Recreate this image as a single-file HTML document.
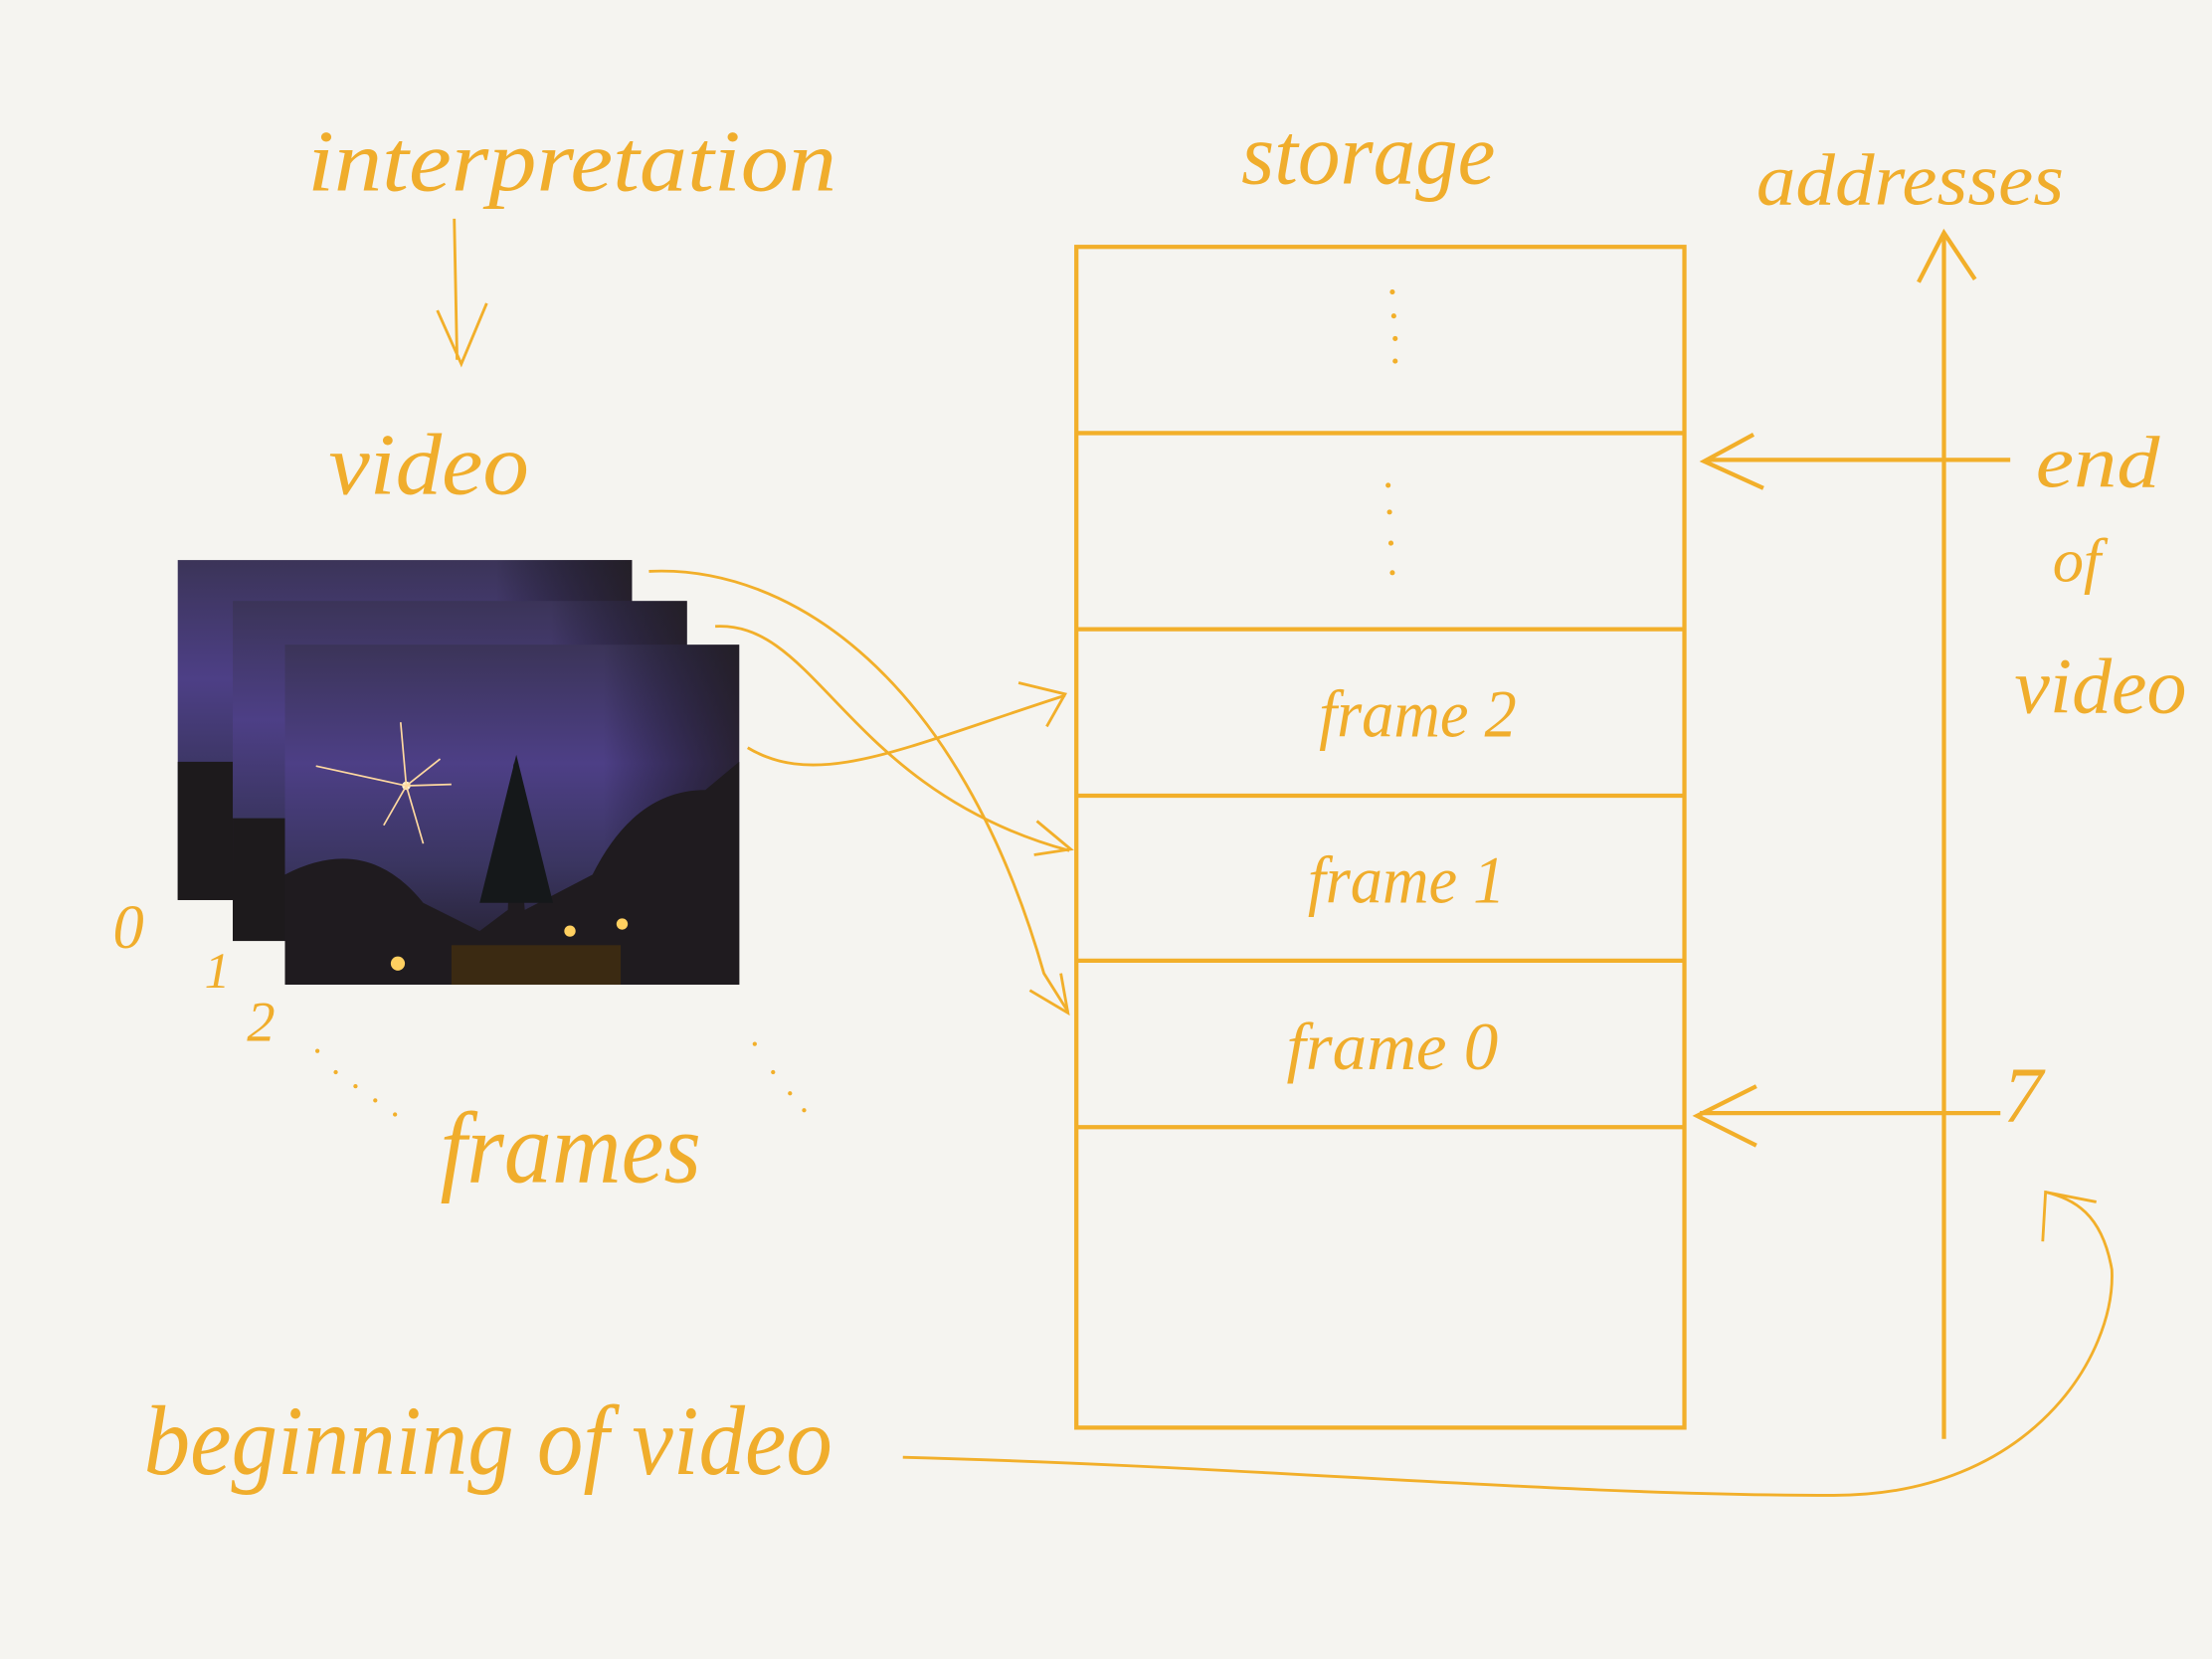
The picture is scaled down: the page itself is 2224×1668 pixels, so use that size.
<!DOCTYPE html>
<html><head><meta charset="utf-8"><style>
html,body{margin:0;padding:0;background:#f5f4f0;}
svg{display:block;}
text{font-family:"Liberation Serif",serif;font-style:italic;fill:#f0ad2c;}
</style></head><body>
<svg width="2224" height="1668" viewBox="0 0 1568 1176" xmlns="http://www.w3.org/2000/svg">
<defs>
<linearGradient id="sky" x1="0" y1="0" x2="0" y2="1">
<stop offset="0" stop-color="#3b3458"/><stop offset="0.35" stop-color="#4d3f86"/><stop offset="0.65" stop-color="#3a3560"/><stop offset="1" stop-color="#1e1a22"/>
</linearGradient>
<linearGradient id="dark" x1="0" y1="0" x2="1" y2="0">
<stop offset="0" stop-color="#000" stop-opacity="0"/><stop offset="0.7" stop-color="#000" stop-opacity="0"/><stop offset="1" stop-color="#1a1612" stop-opacity="0.7"/>
</linearGradient>
</defs>
<rect width="1568" height="1176" fill="#f5f4f0"/>
<g>
<rect x="126" y="397" width="322" height="241" fill="url(#sky)"/><rect x="126" y="397" width="322" height="241" fill="url(#dark)"/>
<rect x="126" y="540" width="40" height="98" fill="#1d1a1c"/>
<rect x="165" y="426" width="322" height="241" fill="url(#sky)"/><rect x="165" y="426" width="322" height="241" fill="url(#dark)"/>
<rect x="165" y="580" width="40" height="87" fill="#1d1a1c"/>
<rect x="202" y="457" width="322" height="241" fill="url(#sky)"/><rect x="202" y="457" width="322" height="241" fill="url(#dark)"/>
<path d="M202 620 Q260 590 300 640 L340 660 L360 645 L364 540 L372 645 L420 620 Q450 560 500 560 L524 540 L524 698 L202 698Z" fill="#1f1b1f"/>
<polygon points="366,535 340,640 392,640" fill="#15181a"/>
<circle cx="288" cy="557" r="3" fill="#fff2d0"/>
<g stroke="#ffd9a0" stroke-width="1.2"><line x1="288" y1="557" x2="284" y2="512"/><line x1="288" y1="557" x2="312" y2="538"/><line x1="288" y1="557" x2="224" y2="543"/><line x1="288" y1="557" x2="320" y2="556"/><line x1="288" y1="557" x2="272" y2="585"/><line x1="288" y1="557" x2="300" y2="598"/></g>
<rect x="320" y="670" width="120" height="28" fill="#3b2a12"/>
<circle cx="404" cy="660" r="4" fill="#ffd060"/><circle cx="441" cy="655" r="4" fill="#ffd060"/><circle cx="282" cy="683" r="5" fill="#ffd060"/>
</g>
<g fill="none" stroke="#f2af2a" stroke-width="3">
<rect x="763" y="175" width="431" height="837"/>
<line x1="763" y1="307" x2="1194" y2="307"/><line x1="763" y1="446" x2="1194" y2="446"/>
<line x1="763" y1="564" x2="1194" y2="564"/><line x1="763" y1="681" x2="1194" y2="681"/>
<line x1="763" y1="799" x2="1194" y2="799"/>
<line x1="1378" y1="165" x2="1378" y2="1020"/>
<polyline points="1360,200 1378,165 1400,198"/>
<line x1="1425" y1="326" x2="1210" y2="326"/><polyline points="1243,308 1208,327 1250,346"/>
<line x1="1418" y1="789" x2="1205" y2="789"/><polyline points="1245,770 1203,791 1245,812"/>
</g>
<g fill="none" stroke="#f2af2a" stroke-width="2">
<path d="M460 405 C560 400 680 480 740 690 L757 717"/><polyline points="730,702 757,718 752,690"/>
<path d="M507 444 C580 440 600 560 758 603"/><polyline points="735,582 759,602 733,606"/>
<path d="M530 530 C580 560 640 530 755 493"/><polyline points="722,484 755,492 742,515"/>
<path d="M640 1033 C900 1040 1100 1060 1300 1060 C1440 1060 1500 960 1497 900 C1490 860 1470 850 1450 845"/><polyline points="1448,880 1450,845 1486,852"/>
<path d="M322 155 L324 255 M310 220 L327 258 L345 215"/>
</g>
<g fill="#f2af2a">
<circle cx="987" cy="207" r="1.8"/><circle cx="988" cy="224" r="1.8"/><circle cx="989" cy="240" r="1.8"/><circle cx="989" cy="256" r="1.8"/>
<circle cx="984" cy="344" r="1.8"/><circle cx="985" cy="363" r="1.8"/><circle cx="986" cy="385" r="1.8"/><circle cx="987" cy="406" r="1.8"/>
<circle cx="225" cy="745" r="1.5"/><circle cx="238" cy="760" r="1.5"/><circle cx="252" cy="770" r="1.5"/><circle cx="266" cy="780" r="1.5"/><circle cx="280" cy="790" r="1.5"/>
<circle cx="535" cy="740" r="1.5"/><circle cx="548" cy="760" r="1.5"/><circle cx="560" cy="775" r="1.5"/><circle cx="570" cy="787" r="1.5"/>
</g>
<text x="218" y="135" font-size="62" textLength="375" lengthAdjust="spacingAndGlyphs">interpretation</text>
<text x="880" y="130" font-size="62" textLength="180" lengthAdjust="spacingAndGlyphs">storage</text>
<text x="1245" y="145" font-size="52" textLength="218" lengthAdjust="spacingAndGlyphs">addresses</text>
<text x="233" y="350" font-size="62" textLength="142" lengthAdjust="spacingAndGlyphs">video</text>
<text x="1443" y="345" font-size="52" textLength="88" lengthAdjust="spacingAndGlyphs">end</text>
<text x="1455" y="412" font-size="44">of</text>
<text x="1428" y="505" font-size="56" textLength="122" lengthAdjust="spacingAndGlyphs">video</text>
<text x="935" y="522" font-size="48" textLength="140" lengthAdjust="spacingAndGlyphs">frame 2</text>
<text x="927" y="640" font-size="48" textLength="140" lengthAdjust="spacingAndGlyphs">frame 1</text>
<text x="912" y="758" font-size="48" textLength="150" lengthAdjust="spacingAndGlyphs">frame 0</text>
<text x="80" y="672" font-size="44">0</text>
<text x="145" y="700" font-size="36">1</text>
<text x="175" y="738" font-size="40">2</text>
<text x="312" y="838" font-size="72" textLength="185" lengthAdjust="spacingAndGlyphs">frames</text>
<text x="1420" y="795" font-size="56">7</text>
<text x="102" y="1045" font-size="70" textLength="488" lengthAdjust="spacingAndGlyphs">beginning of video</text>
</svg>
</body></html>
